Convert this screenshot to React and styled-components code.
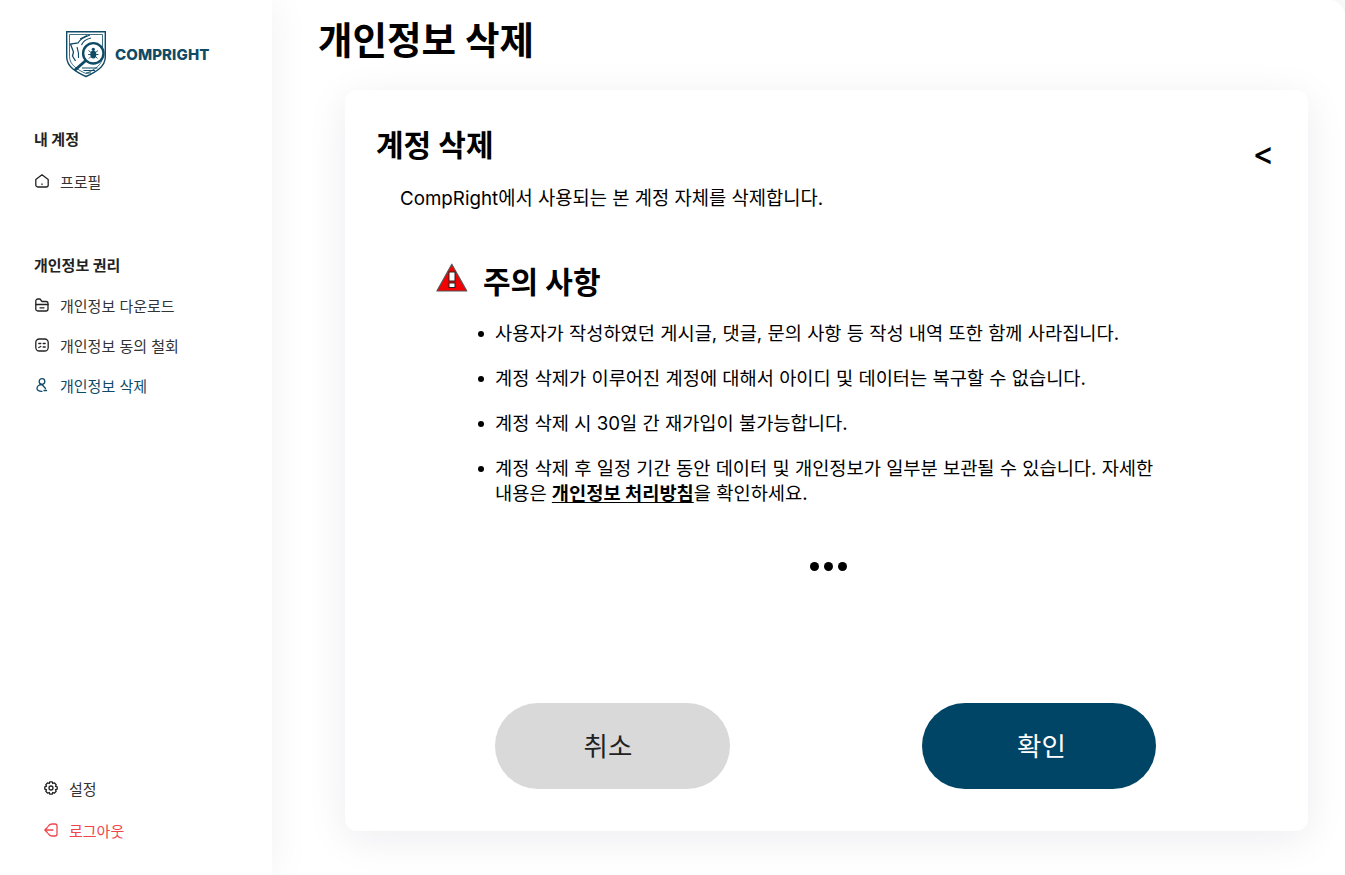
import React from "react";
import styled, { createGlobalStyle } from "styled-components";

const GlobalStyle = createGlobalStyle`
  html, body { margin: 0; padding: 0; background: #fff; }
  body { font-family: Inter, "Noto Sans CJK KR", sans-serif; color: #000; }
  * { box-sizing: border-box; }
`;

const Page = styled.div`
  display: flex;
  width: 1345px;
  height: 875px;
  overflow: hidden;
  background: #f8f8f8;
`;

const Sidebar = styled.aside`
  width: 272px;
  flex: none;
  display: flex;
  flex-direction: column;
  padding: 30px 0 0 34px;
  background: #fff;
  box-shadow: 0 0 40px rgba(20, 20, 40, 0.06);
  z-index: 1;
`;

const LogoRow = styled.div`
  display: flex;
  align-items: center;
  gap: 9px;
  margin-left: 32px;
  height: 48px;
`;

const LogoText = styled.span`
  font-size: 15px;
  font-weight: 800;
  color: #0f4a67;
  letter-spacing: 0.1px;
`;

const GroupTitle = styled.div`
  font-size: 15px;
  line-height: 20px;
  font-weight: 700;
  color: #222;
  margin-top: ${(p) => p.$top}px;
  margin-bottom: ${(p) => p.$bottom}px;
`;

const MenuItem = styled.div`
  display: flex;
  align-items: center;
  gap: 10px;
  height: 40px;
  font-size: 15px;
  color: ${(p) => p.$color || "#333"};
`;

const FootMenu = styled.div`
  margin-top: auto;
  padding: 0 0 25px 9px;
  display: flex;
  flex-direction: column;
  gap: 2px;
`;

const Main = styled.main`
  flex: 1;
  padding: 0 37px 44px 46px;
  display: flex;
  flex-direction: column;
  background: #fff;
  border-top-right-radius: 16px;
`;

const PageTitle = styled.h1`
  margin: 15px 0 18px;
  font-size: 37.5px;
  line-height: 52px;
  font-weight: 700;
  height: 57px;
`;

const Card = styled.section`
  position: relative;
  margin-left: 27px;
  flex: 1;
  display: flex;
  flex-direction: column;
  background: #fff;
  border-radius: 12px;
  padding: 36px 31px 42px;
  box-shadow: 0 8px 40px rgba(30, 30, 70, 0.08);
`;

const CardTitle = styled.h2`
  margin: 0;
  font-size: 30px;
  line-height: 38px;
  font-weight: 700;
`;

const BackMark = styled.span`
  position: absolute;
  top: 46px;
  right: 34px;
  font-size: 32px;
  line-height: 36px;
  font-weight: 500;
`;

const Lead = styled.p`
  margin: 22px 0 0 24px;
  font-size: 18.75px;
  line-height: 26px;
`;

const NoticeHead = styled.div`
  display: flex;
  align-items: center;
  gap: 15px;
  margin: 50px 0 0 60px;
  font-size: 30px;
  line-height: 40px;
  font-weight: 700;
`;

const WarningMark = styled.svg`
  margin-top: -9px;
`;

const NoticeList = styled.ul`
  margin: 19px 0 0 119px;
  padding: 0;
  width: 663px;
  list-style: none;
  display: flex;
  flex-direction: column;
  gap: 20px;
`;

const NoticeItem = styled.li`
  position: relative;
  font-size: 18.7px;
  line-height: 25px;
  word-break: keep-all;
  &::before {
    content: "";
    position: absolute;
    left: -17px;
    top: 10px;
    width: 6px;
    height: 6px;
    border-radius: 50%;
    background: #000;
  }
`;

const PolicyLink = styled.a`
  font-weight: 700;
  color: #000;
  text-decoration: underline;
  text-underline-offset: 2px;
`;

const Dots = styled.div`
  display: flex;
  justify-content: center;
  gap: 5px;
  margin: 56px 0 0 3px;
`;

const Dot = styled.i`
  width: 9px;
  height: 9px;
  border-radius: 50%;
  background: #000;
`;

const Actions = styled.div`
  margin-top: auto;
  display: flex;
  justify-content: space-between;
  padding: 0 121px 0 119px;
`;

const Button = styled.button`
  width: ${(p) => p.$w}px;
  height: 86px;
  border: 0;
  border-radius: 43px;
  padding: 0 ${(p) => (p.$primary ? 0 : 9)}px 4px ${(p) => (p.$primary ? 5 : 0)}px;
  font: inherit;
  font-size: 26.5px;
  background: ${(p) => (p.$primary ? "#004565" : "#d9d9d9")};
  color: ${(p) => (p.$primary ? "#fff" : "#222")};
`;

const Icon = ({ children, color = "#222", size = 16 }) => (
  <svg width={size} height={size} viewBox="0 0 16 16" fill="none" stroke={color} strokeWidth="1.3" strokeLinecap="round" strokeLinejoin="round">
    {children}
  </svg>
);

const Logo = () => (
  <svg width="40" height="48" viewBox="0 0 40 48" fill="none" stroke="#0f4a67">
    <path d="M0.700 1.700H39.300V27C39.300 37 29 42.500 20 46.500C11 42.500 0.700 37 0.700 27Z" strokeWidth="1.400" />
    <path d="M3.500 4.500H36.500V26.500C36.500 35 28 40 20 43.500C12 40 3.500 35 3.500 26.500Z" strokeWidth="0.800" />
    <path d="M24 5C18 7 14 9 12 13L4.500 14L7.500 22L6.500 26L9.500 31" strokeWidth="1.300" />
    <path d="M25 8C21 9 17 11 15.500 15M14 9C16 8 19 6.500 21 5.500" strokeWidth="1.100" />
    <path d="M11 17C12 20 13 24 12.500 28" strokeWidth="1.100" />
    <circle cx="27.300" cy="23.300" r="10.200" strokeWidth="2.400" fill="#fff" />
    <path d="M19.800 30.500L8.500 40.500" strokeWidth="3" />
    <path d="M16 38H31.500M17.500 40.500H29M20 43H25" strokeWidth="1.100" />
    <ellipse cx="27.300" cy="24.500" rx="3" ry="4" fill="#0f4a67" stroke="none" />
    <circle cx="27.300" cy="19.300" r="1.600" fill="#0f4a67" stroke="none" />
    <path d="M22.500 20.500L25 22.500M32 20.500L29.500 22.500M22 24.500H25M32.500 24.500H29.500M23 28.500L25 26.500M31.500 28.500L29.500 26.500" strokeWidth="0.900" />
  </svg>
);

const Warning = () => (
  <WarningMark width="32" height="30" viewBox="0 0 32 30">
    <path d="M15.800 1.200L30.800 28H0.900Z" fill="#f40000" stroke="#555" strokeWidth="1.200" strokeLinejoin="round" />
    <rect x="13" y="9" width="6" height="9" fill="#fff" stroke="#222" strokeWidth="1" />
    <rect x="13" y="20" width="6" height="4.500" fill="#fff" stroke="#222" strokeWidth="1" />
  </WarningMark>
);

export default function App() {
  return (
    <Page>
      <GlobalStyle />
      <Sidebar>
        <LogoRow>
          <Logo />
          <LogoText>COMPRIGHT</LogoText>
        </LogoRow>
        <GroupTitle $top={52} $bottom={11}>내 계정</GroupTitle>
        <MenuItem>
          <Icon>
            <path d="M1.800 6.500L8 1.800L14.200 6.500V12a2 2 0 0 1-2 2H3.800a2 2 0 0 1-2-2Z" />
            <path d="M8 11V11.500" />
          </Icon>
          프로필
        </MenuItem>
        <GroupTitle $top={55} $bottom={9}>개인정보 권리</GroupTitle>
        <MenuItem>
          <Icon>
            <path d="M1.800 12V4a2 2 0 0 1 2-2H6L8 4.500H12a2 2 0 0 1 2 2V12a2 2 0 0 1-2 2H3.800a2 2 0 0 1-2-2Z" />
            <path d="M2 7.500H14M6 10.800H10" />
          </Icon>
          개인정보 다운로드
        </MenuItem>
        <MenuItem>
          <Icon>
            <rect x="1.800" y="2" width="12.400" height="12" rx="3.500" />
            <path d="M4.800 6.500H6.800M9.200 6.500H11.200M4.800 10.500L6.800 9.500M9.200 10H11.200" />
          </Icon>
          개인정보 동의 철회
        </MenuItem>
        <MenuItem $color="#0f4a67">
          <Icon color="#0f4a67">
            <circle cx="8" cy="4.500" r="2.800" />
            <path d="M8 7.500C5 7.500 3 9.500 3 11.500C3 13.500 5.500 14.300 8 14.300M8 7.500L11.500 11.500M12.500 13.500H10" />
          </Icon>
          개인정보 삭제
        </MenuItem>
        <FootMenu>
          <MenuItem>
            <Icon>
              <circle cx="8" cy="8" r="2" />
              <path d="M6.800 1.800H9.200L9.700 3.500L11.300 2.800L13.200 4.700L12.500 6.300L14.200 6.800V9.200L12.500 9.700L13.200 11.300L11.300 13.200L9.700 12.500L9.200 14.200H6.800L6.300 12.500L4.700 13.200L2.800 11.300L3.500 9.700L1.800 9.200V6.800L3.500 6.300L2.800 4.700L4.700 2.800L6.300 3.500Z" />
            </Icon>
            설정
          </MenuItem>
          <MenuItem $color="#f0444c">
            <Icon color="#f0444c">
              <path d="M5 4.500C5.800 3 7.200 2 9 2H12a2 2 0 0 1 2 2V12a2 2 0 0 1-2 2H9C7.200 14 5.800 13 5 11.500" />
              <path d="M10 8H1.800M4.300 5.500L1.800 8L4.300 10.500" />
            </Icon>
            로그아웃
          </MenuItem>
        </FootMenu>
      </Sidebar>
      <Main>
        <PageTitle>개인정보 삭제</PageTitle>
        <Card>
          <CardTitle>계정 삭제</CardTitle>
          <BackMark>&lt;</BackMark>
          <Lead>CompRight에서 사용되는 본 계정 자체를 삭제합니다.</Lead>
          <NoticeHead>
            <Warning />
            주의 사항
          </NoticeHead>
          <NoticeList>
            <NoticeItem>사용자가 작성하였던 게시글, 댓글, 문의 사항 등 작성 내역 또한 함께 사라집니다.</NoticeItem>
            <NoticeItem>계정 삭제가 이루어진 계정에 대해서 아이디 및 데이터는 복구할 수 없습니다.</NoticeItem>
            <NoticeItem>계정 삭제 시 30일 간 재가입이 불가능합니다.</NoticeItem>
            <NoticeItem>
              계정 삭제 후 일정 기간 동안 데이터 및 개인정보가 일부분 보관될 수 있습니다. 자세한 내용은{" "}
              <PolicyLink>개인정보 처리방침</PolicyLink>을 확인하세요.
            </NoticeItem>
          </NoticeList>
          <Dots>
            <Dot />
            <Dot />
            <Dot />
          </Dots>
          <Actions>
            <Button $w={235}>취소</Button>
            <Button $w={234} $primary>
              확인
            </Button>
          </Actions>
        </Card>
      </Main>
    </Page>
  );
}
